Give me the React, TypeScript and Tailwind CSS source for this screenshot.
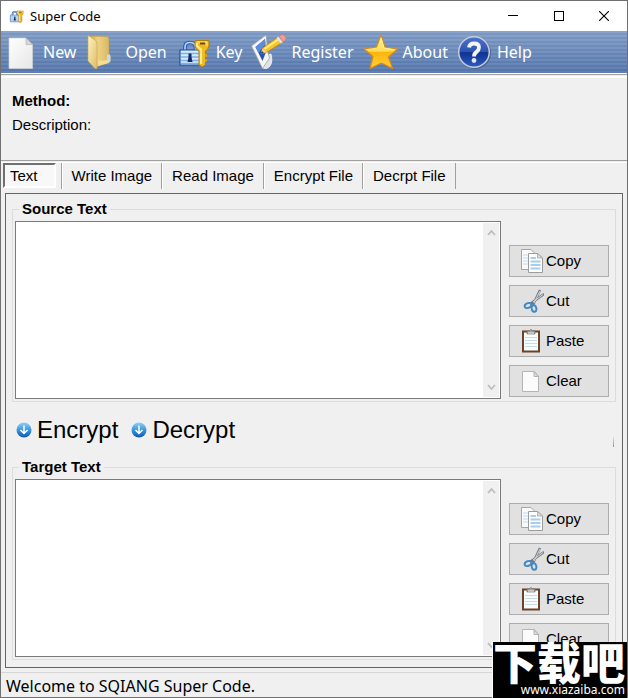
import { useState } from "react";

const tabs = ["Text", "Write Image", "Read Image", "Encrypt File", "Decrpt File"];

export default function App() {
  const [tab, setTab] = useState("Text");
  const [source, setSource] = useState("");
  const [target, setTarget] = useState("");

  return (
    <main className="relative flex min-h-screen flex-col border border-[#707070] bg-[#f0f0f0] font-['Liberation_Sans',Arial,sans-serif] text-[15px] leading-[18px] text-black">
      <TitleBar />

      <nav className="flex h-[42px] items-center bg-[repeating-linear-gradient(180deg,rgba(255,255,255,.05)_0_2px,rgba(20,50,100,.06)_2px_4px),linear-gradient(180deg,#84a0c8,#5778ad)] pl-px font-['Noto_Sans',sans-serif] text-[16px] text-white">
        <ToolButton icon={<NewIcon />} label="New" />
        <ToolButton icon={<FolderIcon />} label="Open" />
        <ToolButton icon={<LockKeyIcon />} label="Key" />
        <ToolButton icon={<RegisterIcon />} label="Register" />
        <ToolButton icon={<StarIcon />} label="About" />
        <ToolButton icon={<HelpIcon />} label="Help" />
      </nav>

      <div className="h-[5px] border-b-2 border-white bg-[#f0f0f0]">
        <div className="h-[2px] border-t border-white bg-[#a0a0a0]" />
      </div>

      <section className="h-[82px] px-[11px] pt-[14px]">
        <h1 className="font-bold">Method:</h1>
        <p className="mt-[6px]">Description:</p>
      </section>

      <div className="h-[3px] border-t border-b border-t-[#a0a0a0] border-b-white" />

      <div role="tablist" className="flex h-[26px] items-stretch pl-[2px]">
        {tabs.map((name) => (
          <TabButton key={name} name={name} active={tab === name} onClick={() => setTab(name)} />
        ))}
      </div>

      <div className="mx-1 mt-[4px] flex flex-1 flex-col border border-[#646464] px-[6px] pt-[6px] pb-[7px]">
        <TextGroup title="Source Text" value={source} setValue={setSource} />

        <div className="flex h-14 shrink-0 items-center gap-[13px] pl-1 text-[24px] leading-[28px]">
          <ActionButton label="Encrypt" />
          <ActionButton label="Decrypt" />
          <div className="mt-6 mr-[2px] ml-auto h-[10px] w-px bg-gradient-to-b from-[#e4e4e4] to-[#909090]" />
        </div>

        <TextGroup title="Target Text" value={target} setValue={setTarget} />
      </div>

      <footer className="mt-[4px] h-[25px] border-t border-[#d7d7d7] px-[5px] font-['Noto_Sans',sans-serif] text-[16px] leading-[26px]">
        Welcome to SQIANG Super Code.
      </footer>

      <Watermark />
    </main>
  );
}

function TitleBar() {
  return (
    <header className="flex h-[30px] items-center bg-white pl-2 font-['Noto_Sans',sans-serif] text-[13px]">
      <svg width="16" height="16" viewBox="0 0 36 36" className="mr-[5px]">
        <LockKeyShape />
      </svg>
      <span className="flex-1">Super Code</span>
      <button type="button" aria-label="Minimize" className="flex h-full w-[46px] items-center justify-center">
        <svg width="10" height="10" shapeRendering="crispEdges">
          <path d="M0 4.500H10" stroke="#000" />
        </svg>
      </button>
      <button type="button" aria-label="Maximize" className="flex h-full w-[45px] items-center justify-center">
        <svg width="10" height="10" shapeRendering="crispEdges">
          <path d="M.5 .5H9.500V9.500H.5Z" fill="none" stroke="#000" />
        </svg>
      </button>
      <button type="button" aria-label="Close" className="flex h-full w-[46px] items-center justify-center">
        <svg width="10" height="10">
          <path d="M0 0L10 10M10 0L0 10" stroke="#000" strokeWidth="1.100" />
        </svg>
      </button>
    </header>
  );
}

function ToolButton({ icon, label }: { icon: React.ReactNode; label: string }) {
  return (
    <button type="button" className="flex items-center gap-[4px] pr-2 leading-[24px]">
      {icon}
      {label}
    </button>
  );
}

function TabButton({ name, active, onClick }: { name: string; active: boolean; onClick: () => void }) {
  return (
    <div className="flex border-r border-[#a0a0a0]">
      <button
        type="button"
        role="tab"
        aria-selected={active}
        onClick={onClick}
        className={
          active
            ? "mr-[5px] mb-px border-2 border-t-[#707070] border-r-white border-b-white border-l-[#707070] bg-[#f8f8f8] pr-4 pl-[5px]"
            : "border-l border-white pr-[9px] pl-[9px]"
        }
      >
        {name}
      </button>
    </div>
  );
}

function ActionButton({ label }: { label: string }) {
  return (
    <button type="button" className="flex items-center gap-[5px]">
      <svg width="16" height="16" viewBox="0 0 16 16">
        <defs>
          <linearGradient id="ball" x1="0" y1="0" x2="0" y2="1">
            <stop offset="0" stopColor="#8fd0f5" />
            <stop offset=".5" stopColor="#3c96dc" />
            <stop offset="1" stopColor="#0c58b0" />
          </linearGradient>
        </defs>
        <circle cx="8" cy="8" r="7.500" fill="url(#ball)" />
        <path d="M8 3.500V11.500M4.500 8L8 11.500L11.500 8" fill="none" stroke="#fff" strokeWidth="1.500" />
      </svg>
      {label}
    </button>
  );
}

function TextGroup({
  title,
  value,
  setValue,
}: {
  title: string;
  value: string;
  setValue: (value: string) => void;
}) {
  return (
    <fieldset className="flex min-w-0 flex-1 flex-col border border-[#dcdcdc] px-[2px] pt-[3px] pb-px">
      <legend className="ml-[4px] px-[3px] font-bold">{title}</legend>
      <div className="flex flex-1 gap-2">
        <div className="flex min-h-[178px] flex-1 border border-[#7a7a7a] bg-white">
          <textarea
            aria-label={title}
            value={value}
            onChange={(e) => setValue(e.target.value)}
            className="flex-1 resize-none bg-white p-1 outline-none"
          />
          <div className="my-px mr-px flex w-4 flex-col items-center justify-between bg-[#f0f0f0] py-[6px]">
            <ScrollArrow d="M1 6L4.500 2L8 6" />
            <ScrollArrow d="M1 2L4.500 6L8 2" />
          </div>
        </div>
        <div className="mr-[4px] flex w-[100px] flex-col gap-2 pt-6">
          <SideButton icon={<CopyIcon />} label="Copy" onClick={() => navigator.clipboard?.writeText(value)} />
          <SideButton icon={<CutIcon />} label="Cut" onClick={() => setValue("")} />
          <SideButton icon={<PasteIcon />} label="Paste" />
          <SideButton icon={<ClearIcon />} label="Clear" onClick={() => setValue("")} />
        </div>
      </div>
    </fieldset>
  );
}

function ScrollArrow({ d }: { d: string }) {
  return (
    <svg width="9" height="8" viewBox="0 0 9 8">
      <path d={d} fill="none" stroke="#bcbcbc" strokeWidth="1.800" />
    </svg>
  );
}

function SideButton({ icon, label, onClick }: { icon: React.ReactNode; label: string; onClick?: () => void }) {
  return (
    <button
      type="button"
      onClick={onClick}
      className="flex h-8 items-center gap-[2px] border border-[#adadad] bg-[#e1e1e1] pl-[10px]"
    >
      {icon}
      {label}
    </button>
  );
}

function NewIcon() {
  return (
    <svg width="37" height="36" viewBox="0 0 37 36">
      <defs>
        <linearGradient id="paper" x1="0" y1="0" x2="1" y2="1">
          <stop offset="0" stopColor="#fff" />
          <stop offset="1" stopColor="#e6e6e6" />
        </linearGradient>
      </defs>
      <path d="M7 4H24L30.500 10.500V34.500H7Z" fill="url(#paper)" stroke="#cfd3d8" strokeWidth=".7" />
      <path d="M24 4V10.500H30.500Z" fill="#d8d8d8" stroke="#b4b4b4" strokeWidth=".7" />
    </svg>
  );
}

function FolderIcon() {
  return (
    <svg width="37" height="36" viewBox="0 0 37 36">
      <defs>
        <linearGradient id="folder" x1="0" y1="0" x2="1" y2="0">
          <stop offset="0" stopColor="#caa04a" />
          <stop offset=".45" stopColor="#ecd183" />
          <stop offset="1" stopColor="#d8b560" />
        </linearGradient>
        <linearGradient id="leaf" x1="0" y1="0" x2="1" y2="1">
          <stop offset="0" stopColor="#fdf3c4" />
          <stop offset="1" stopColor="#e0bd64" />
        </linearGradient>
      </defs>
      <path d="M4 2L23 2.500Q25 2.500 25 5V20Q27 22 26 28L12 33V8Z" fill="url(#folder)" stroke="#bf9742" strokeWidth=".6" />
      <path d="M4 1.500L11 6Q13 7 13 10V34.500Q11 35.500 10 33.500L4 27Z" fill="url(#leaf)" stroke="#c9a550" strokeWidth=".6" />
      <path d="M14 26Q19 28 25 25V29L14 32Z" fill="#f4dc90" />
      <path d="M23 21Q26 19 26.500 22V27Q25 29.500 23 28Z" fill="#c8dae8" />
    </svg>
  );
}

function LockKeyShape() {
  return (
    <>
      <path d="M8 17V13Q8 8.500 13 8.500T18.500 13V17" fill="none" stroke="#1d58b3" strokeWidth="3.600" />
      <path d="M8 17V13Q8 8.500 13 8.500T18.500 13V17" fill="none" stroke="#b6d4f7" strokeWidth="1.600" />
      <path d="M3 16H23V31H3Z" fill="#d9eafb" stroke="#1b51a8" strokeWidth="1.200" />
      <path d="M4 19.500H22M4 23H22M4 26.500H22M4 29.500H22" stroke="#7fb0e8" strokeWidth="1.300" />
      <path d="M11.500 19.500H14.500V23L15.500 28H10.500L11.500 23Z" fill="#102c66" />
      <path d="M18 6.500H32V12Q31 16 28.500 17V31L25 33L22 31V17Q18 15 18 12Z" fill="#efb91f" stroke="#b27c0b" strokeWidth="1" />
      <path d="M20 9V12L24 15.500V30" fill="none" stroke="#ffe98a" strokeWidth="2.200" />
      <path d="M20 8H30V12" fill="none" stroke="#ffe98a" strokeWidth="1" />
      <path d="M23 8.500H28V10.500H23Z" fill="#6d4c08" />
      <path d="M28 20H30V23H28V25H30V28H28" fill="#d99c12" />
    </>
  );
}

function LockKeyIcon() {
  return (
    <svg width="37" height="36" viewBox="-2 0 37 36">
      <LockKeyShape />
    </svg>
  );
}

function RegisterIcon() {
  return (
    <svg width="37" height="36" viewBox="0 0 37 36">
      <path d="M14 22L21 20Q23 28 20 32Q17 36 13 34Z" fill="#e2e2e2" stroke="#f6f6f6" strokeWidth=".8" />
      <path d="M1.500 12L16 1L18 19L19.500 24L12.500 34.500Z" fill="#f6f6f6" stroke="#9ea4ac" strokeWidth=".8" />
      <path d="M5.500 13L15 5L16 18L12.500 27Z" fill="#2455b3" />
      <path d="M5.500 13L15 5L15.500 10L8.500 19Z" fill="#5f8cd9" />
      <path d="M12.500 14L28 3L33 8L17 18L11 20Z" fill="#f9c523" stroke="#c17d12" strokeWidth=".7" />
      <path d="M14.500 15L29 5" stroke="#fff08a" strokeWidth="1.600" />
      <path d="M11 20L12.500 14.500L17 18Z" fill="#efd0a0" />
      <path d="M11 20L11.800 17L14 19Z" fill="#333" />
      <path d="M26.500 4L28.500 2.500L33 8L30.500 9.500Z" fill="#dfe2e6" />
      <path d="M29 2.500Q32 -1 35 2T33 8Z" fill="#ef9c94" stroke="#c66b66" strokeWidth=".5" />
    </svg>
  );
}

function StarIcon() {
  return (
    <svg width="37" height="36" viewBox="0 0 37 36">
      <defs>
        <linearGradient id="star" x1="0" y1="0" x2="0" y2="1">
          <stop offset="0" stopColor="#fff3a4" />
          <stop offset=".48" stopColor="#ffdc55" />
          <stop offset=".52" stopColor="#ffb60c" />
          <stop offset="1" stopColor="#ffd03a" />
        </linearGradient>
      </defs>
      <path
        d="M19 1L23 13L35.500 15L26.500 23L30.500 34.500L19.500 29L8 34.500L11 22.500L2 15L14.500 13Z"
        fill="url(#star)"
        stroke="#d98a16"
        strokeWidth="1.200"
        strokeLinejoin="round"
      />
      <path d="M19 4L22 14.200L32.500 16" fill="none" stroke="#ffee98" strokeWidth="1" />
    </svg>
  );
}

function HelpIcon() {
  return (
    <svg width="37" height="36" viewBox="0 0 37 36">
      <defs>
        <linearGradient id="help" x1="0" y1="0" x2="0" y2="1">
          <stop offset="0" stopColor="#4b74cf" />
          <stop offset=".5" stopColor="#2c52b0" />
          <stop offset=".52" stopColor="#0f3290" />
          <stop offset="1" stopColor="#2c5ec4" />
        </linearGradient>
      </defs>
      <circle cx="19" cy="19" r="16" fill="#33507f" opacity=".6" />
      <circle cx="18" cy="18" r="15.300" fill="url(#help)" stroke="#c9ccd2" strokeWidth="1.500" />
      <path d="M13 13.500Q13.500 9.500 18 9.500Q23 9.500 23 13.500Q23 16 20.500 18Q18 19.500 18 22.500" fill="none" stroke="#f4f4f4" strokeWidth="3.800" />
      <circle cx="18" cy="26.500" r="2.400" fill="#e4e6ea" />
    </svg>
  );
}

function CopyIcon() {
  return (
    <svg width="24" height="24" viewBox="0 0 24 24">
      <path d="M1.500 .5H11L15.500 5V20.500H1.500Z" fill="#fafafa" stroke="#a5a5a5" />
      <path d="M3 6H9M3 9H9M3 12H9M3 15H9" stroke="#c2dcf1" strokeWidth="1.200" />
      <path d="M8.500 4.500H17.500L22.500 9V23.500H8.500Z" fill="#fdfdfd" stroke="#9c9c9c" />
      <path d="M17.500 4.500V9H22.500Z" fill="#ddd" stroke="#9c9c9c" strokeWidth=".7" />
      <path d="M10.500 9H16M10.500 12.500H20.500M10.500 16H20.500M10.500 19.500H20.500" stroke="#a7cdec" strokeWidth="1.800" />
    </svg>
  );
}

function CutIcon() {
  return (
    <svg width="24" height="24" viewBox="0 0 24 24">
      <path d="M20 1L13 16M24 5L10 15" stroke="#747a80" strokeWidth="2.400" />
      <path d="M20 2L14 14M23 5.500L13 13" stroke="#d9dcdf" strokeWidth="1" />
      <ellipse cx="8" cy="16.500" rx="3.500" ry="2.400" fill="none" stroke="#4388c6" strokeWidth="1.900" transform="rotate(-25 8 16.500)" />
      <ellipse cx="14" cy="19.500" rx="2.300" ry="3.300" fill="none" stroke="#4388c6" strokeWidth="1.900" transform="rotate(-12 14 19.500)" />
    </svg>
  );
}

function PasteIcon() {
  return (
    <svg width="24" height="24" viewBox="0 0 24 24">
      <path d="M3 2.500H19V22.500H3Z" fill="#fafdff" stroke="#6b4327" strokeWidth="2" />
      <path d="M5 8.500H17M5 11.500H17M5 14.500H17M5 17.500H17" stroke="#c4dbec" />
      <path d="M7 2H9Q11 -1 13 2H15V5H7Z" fill="#a3a3a3" stroke="#6f6f6f" strokeWidth=".7" />
      <path d="M8 4H14" stroke="#ececec" />
    </svg>
  );
}

function ClearIcon() {
  return (
    <svg width="24" height="24" viewBox="0 0 24 24">
      <path d="M2.500 2.500H14L18.500 7.500V22.500H2.500Z" fill="#fbfbfb" stroke="#b4b4b4" />
      <path d="M14 2.500V7.500H18.500Z" fill="#dcdcdc" stroke="#a6a6a6" strokeWidth=".8" />
    </svg>
  );
}

function Watermark() {
  return (
    <div className="absolute right-0 -bottom-px flex h-14 w-[135px] flex-col items-end border-l border-white bg-black pr-[2px] text-white">
      <span className="font-['Noto_Sans_CJK_SC',sans-serif] text-[44px] leading-[39px] font-black">下载吧</span>
      <span className="font-['Noto_Sans',sans-serif] text-[12px] leading-[17px]">www.xiazaiba.com</span>
    </div>
  );
}
